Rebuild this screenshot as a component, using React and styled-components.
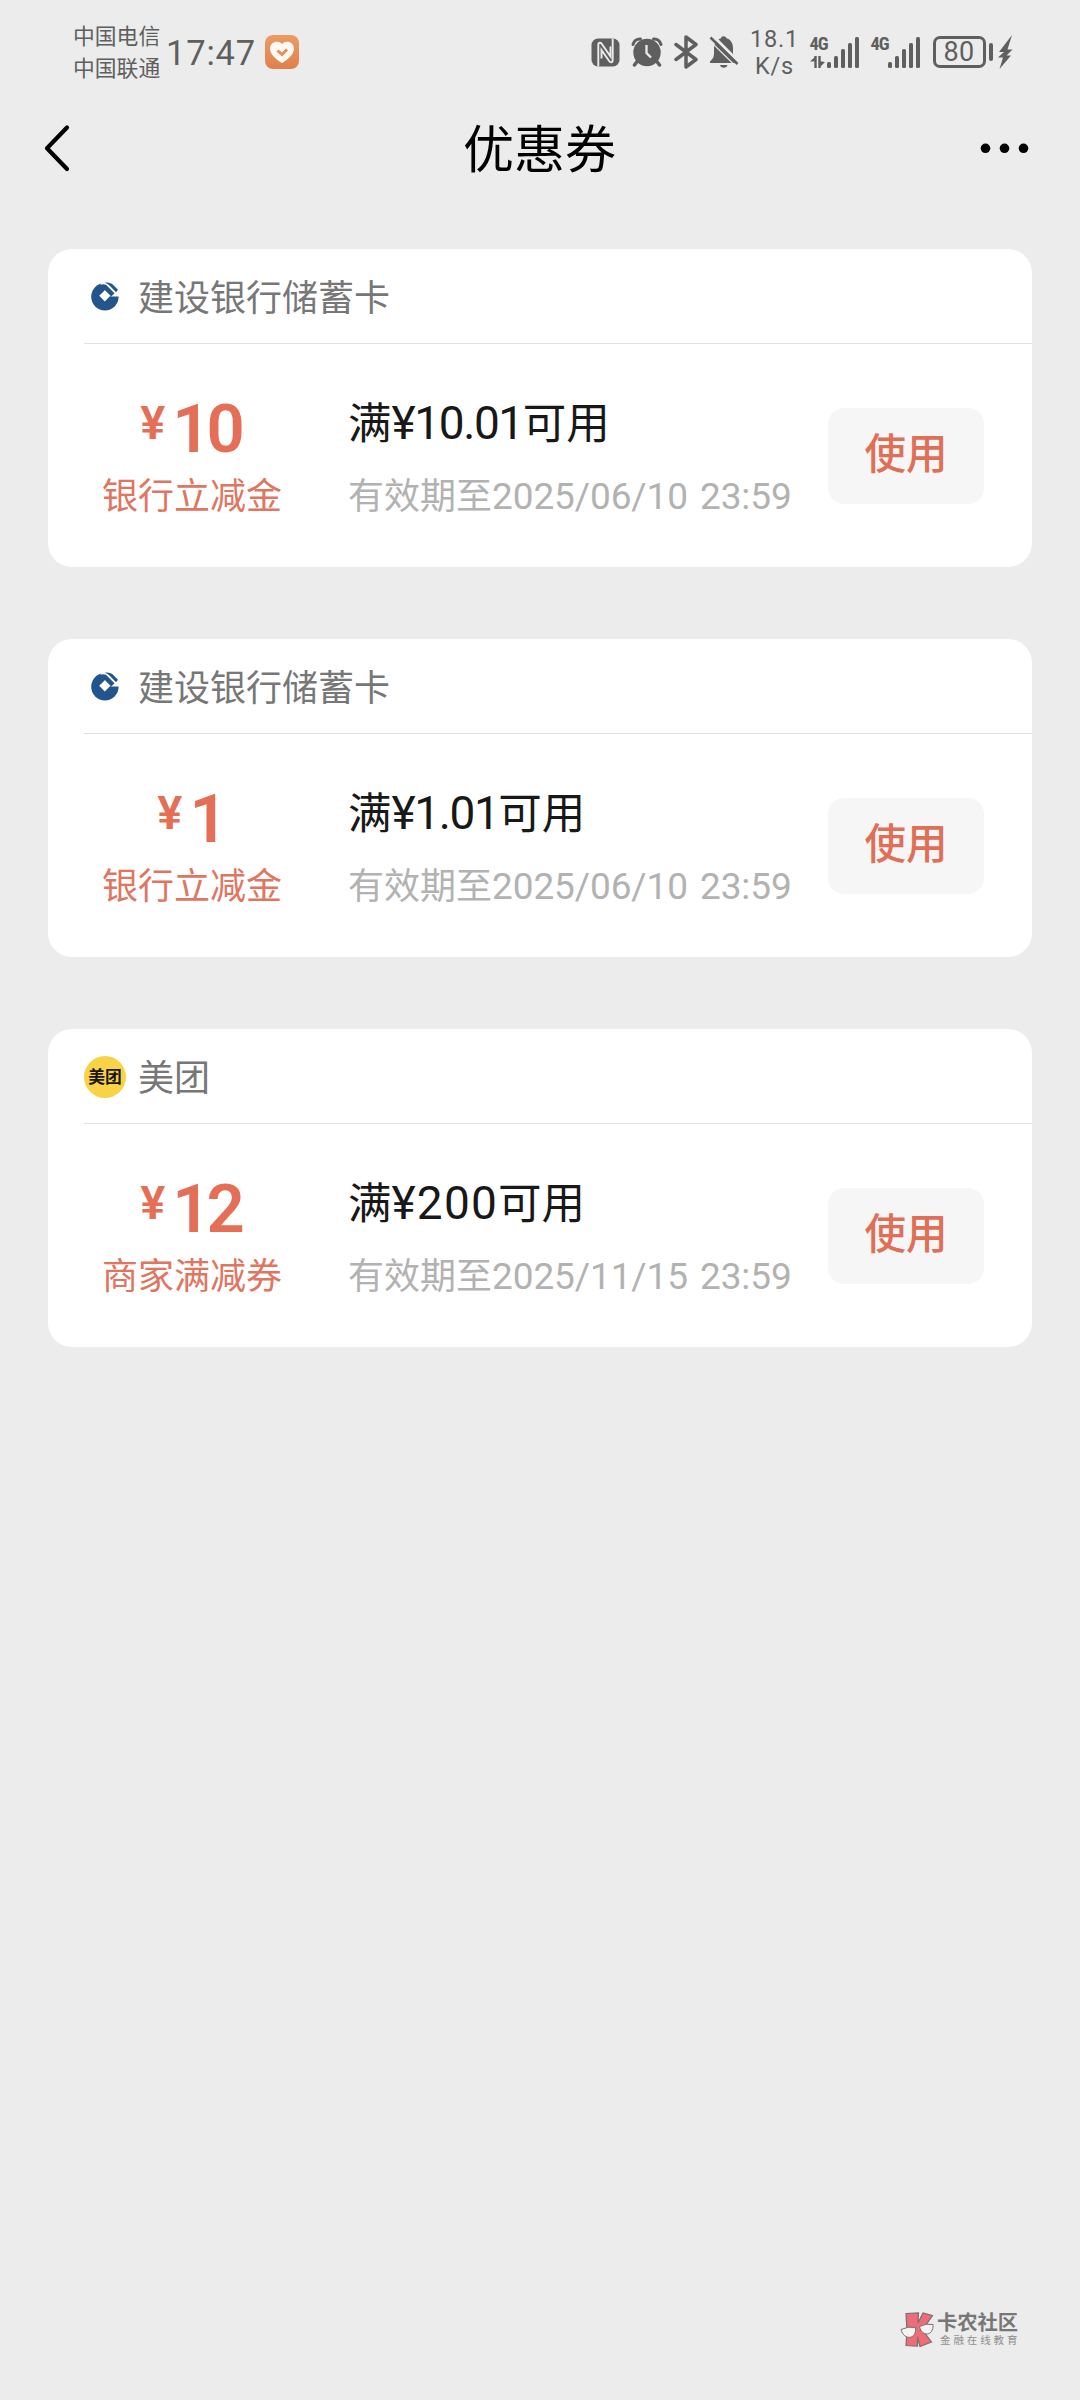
import React from "react";
import styled, { createGlobalStyle } from "styled-components";

const GlobalStyle = createGlobalStyle`
  * { box-sizing: border-box; }
  body {
    margin: 0;
    background: #ececec;
    font-family: Roboto, "Noto Sans CJK SC", sans-serif;
  }
  svg { display: block; flex: none; }
`;

const Screen = styled.div`
  width: 1080px;
  height: 2400px;
  display: flex;
  flex-direction: column;
  background: #ececec;
  overflow: hidden;
`;

const StatusBar = styled.header`
  height: 100px;
  padding: 4px 67px 0 73px;
  display: flex;
  align-items: center;
  color: #5f5f5f;
`;

const Carriers = styled.div`
  width: 88px;
  padding-top: 2px;
  font-size: 21.8px;
  line-height: 32px;
  white-space: nowrap;
`;

const Clock = styled.div`
  width: 99px;
  margin-left: 5px;
  padding-top: 2px;
  font-size: 34.5px;
  letter-spacing: 0.8px;
  line-height: 40px;
`;

const StatusIcons = styled.div`
  margin-left: auto;
  height: 36px;
  display: flex;
  align-items: center;
`;

const IconRow = styled.div`
  display: flex;
  align-items: center;
  gap: 11px;
`;

const Speed = styled.div`
  width: 58px;
  margin-left: 7px;
  padding-top: 1px;
  font-size: 23.5px;
  letter-spacing: 0.8px;
  line-height: 27px;
  text-align: center;
`;

const Signal = styled.div`
  display: flex;
  align-items: flex-end;
  width: 50px;
  height: 31px;
  margin-left: ${(p) => p.$gap}px;
`;

const Network = styled.div`
  width: 17px;
  height: 31px;
  display: flex;
  flex-direction: column;
  justify-content: space-between;
  font: 700 18.5px/15px Roboto, sans-serif;
  font-stretch: 75%;
  letter-spacing: -1px;
`;

const Bars = styled.div`
  display: flex;
  align-items: flex-end;
  gap: 3px;
`;

const Bar = styled.i`
  width: 4.2px;
  height: ${(p) => p.$h}px;
  border-radius: 1.5px;
  background: #5f5f5f;
`;

const Battery = styled.div`
  width: 53px;
  height: 32px;
  margin-left: 12px;
  border: 3px solid #5f5f5f;
  border-radius: 7px;
  font-size: 27px;
  line-height: 27px;
  letter-spacing: 0.3px;
  text-align: center;
`;

const BatteryCap = styled.i`
  width: 4.5px;
  height: 18px;
  margin: 0 5px 0 3px;
  border-radius: 2px;
  background: #5f5f5f;
`;

const NavBar = styled.nav`
  height: 96px;
  padding: 0 50px 0 43px;
  display: grid;
  grid-template-columns: 1fr auto 1fr;
  align-items: center;
  svg:last-child { justify-self: end; }
`;

const PageTitle = styled.h1`
  margin: 0;
  padding: 5px 0 0 6px;
  font-size: 51px;
  font-weight: 400;
  line-height: 60px;
  color: #000;
`;

const CouponList = styled.main`
  padding: 53px 48px 0;
  display: flex;
  flex-direction: column;
  gap: 72px;
`;

const Card = styled.section`
  height: 318px;
  padding-left: 36px;
  border-radius: 24px;
  background: #fff;
`;

const CardHeader = styled.div`
  height: 95px;
  padding-top: 2px;
  display: flex;
  align-items: center;
  gap: 12px;
  border-bottom: 1px solid #e0e0e0;
  font-size: 36px;
  color: #777;
`;

const Issuer = styled.span`
  line-height: 42px;
  padding-top: 3px;
`;

const MeituanBadge = styled.span`
  width: 42px;
  height: 42px;
  display: flex;
  align-items: center;
  justify-content: center;
  border-radius: 50%;
  background: #f8d247;
  color: #1b1607;
  font-size: 16.8px;
  font-weight: 700;
  line-height: 42px;
`;

const CardBody = styled.div`
  height: 223px;
  display: flex;
  padding-right: 48px;
`;

const Worth = styled.div`
  width: 216px;
  padding-top: 44px;
  display: flex;
  flex-direction: column;
  align-items: center;
  color: #e56f56;
`;

const Amount = styled.div`
  height: 76px;
  padding-right: 3px;
  display: flex;
  align-items: flex-start;
  font-weight: 600;
`;

const Yen = styled.span`
  font-size: 47px;
  line-height: 70px;
`;

const Figure = styled.span`
  margin-left: 7px;
  font-size: 67px;
  line-height: 83px;
  letter-spacing: -4px;
`;

const Kind = styled.div`
  font-size: 36px;
  line-height: 66px;
  color: #e07561;
`;

const Info = styled.div`
  flex: 1;
  padding: 43px 0 0 48px;
  white-space: nowrap;
`;

const Condition = styled.div`
  font-size: 43.5px;
  line-height: 72px;
  color: #181818;
`;

const Money = styled.span`
  font-size: 46px;
  letter-spacing: ${(p) => (p.$decimal ? -1.4 : 1.2)}px;
`;

const Validity = styled.div`
  padding-top: 3px;
  font-size: 36px;
  line-height: 66px;
  color: #b2b2b2;
`;

const Stamp = styled.span`
  font-size: 37px;
  word-spacing: 3px;
  letter-spacing: -0.1px;
`;

const UseButton = styled.button`
  width: 156px;
  height: 96px;
  margin-top: 64px;
  padding: 0 0 10px 0;
  border: 0;
  border-radius: 16px;
  background: #f6f6f6;
  color: #e06f58;
  font-family: inherit;
  font-size: 41.5px;
  font-weight: 500;
`;

const Watermark = styled.footer`
  margin-top: auto;
  padding: 0 61px 52px 0;
  display: flex;
  justify-content: flex-end;
  align-items: center;
  gap: 2px;
`;

const Brand = styled.div`
  width: 82px;
  color: #777;
  font-size: 20.3px;
  font-weight: 700;
  line-height: 21px;
  white-space: nowrap;
`;

const Tagline = styled.div`
  padding-left: 3px;
  color: #8f8f8f;
  font-size: 10.5px;
  font-weight: 400;
  letter-spacing: 2.9px;
  line-height: 13px;
`;

const HeartIcon = () => (
  <svg width="34" height="34" viewBox="0 0 34 34">
    <defs>
      <linearGradient id="heartBg" x1="0" y1="0" x2="0" y2="1">
        <stop offset="0" stopColor="#eb9c63" />
        <stop offset="1" stopColor="#e0804f" />
      </linearGradient>
    </defs>
    <rect width="34" height="34" rx="8" fill="url(#heartBg)" />
    <path d="M17 28C14 26.5 5 20.5 5 13.5C5 7 13 4.5 17 9C21 4.500 29 7 29 13.500C29 20.500 20 26.500 17 28Z" fill="#fffaf3" />
    <path d="M12.500 15.500L17 19.500L22 14.500" fill="none" stroke="#e98d59" strokeWidth="3" />
  </svg>
);

const NfcIcon = () => (
  <svg width="29" height="29" viewBox="0 0 29 29">
    <rect x=".5" y=".5" width="28" height="28" rx="6.500" fill="#5f5f5f" />
    <path d="M7.300 28.500V6.500C7.300 4.500 9.500 4.200 10.700 5.800L19.500 18.500V8.500" fill="none" stroke="#ececec" strokeWidth="1.900" />
    <path d="M21.700 .5V22.500C21.700 24.500 19.500 24.800 18.300 23.200L10.500 12V20.500" fill="none" stroke="#ececec" strokeWidth="1.900" />
  </svg>
);

const AlarmIcon = () => (
  <svg width="32" height="30" viewBox="0 0 32 30">
    <circle cx="16" cy="15.500" r="13.700" fill="#5f5f5f" />
    <path d="M2 7.500C3 4 6 1.800 9.500 2M30 7.500C29 4 26 1.800 22.500 2" fill="none" stroke="#5f5f5f" strokeWidth="3" strokeLinecap="round" />
    <path d="M6.500 24L3.500 28M25.500 24L28.500 28" stroke="#5f5f5f" strokeWidth="3.500" strokeLinecap="round" />
    <path d="M15.500 8V16L20 20.500" fill="none" stroke="#ececec" strokeWidth="2.300" />
  </svg>
);

const BluetoothIcon = () => (
  <svg width="24" height="34" viewBox="0 0 24 34">
    <path d="M2 9.500L22 24.500L12 32V2L22 9.500L2 24.500" fill="none" stroke="#5f5f5f" strokeWidth="3.500" strokeLinejoin="round" strokeLinecap="round" />
  </svg>
);

const MutedBellIcon = () => (
  <svg width="30" height="34" viewBox="0 0 30 34">
    <path d="M1 26.500C4 24 5 21.500 5 18V13C5 8 8.500 4 12 3.200C12 0.500 17 0.500 17.500 3.200C21.500 4.200 24 8 24 13V18C24 21.500 25.500 24 28.500 26.500V28H1Z" fill="#5f5f5f" />
    <path d="M11 30H18.500C18 33.500 11.500 33.500 11 30Z" fill="#5f5f5f" />
    <path d="M3 0L30 27" stroke="#ececec" strokeWidth="3" />
    <path d="M1.500 2.500L28.500 29" stroke="#5f5f5f" strokeWidth="2.500" />
    <path d="M0 5L26 30.500" stroke="#ececec" strokeWidth="1.200" />
  </svg>
);

const DataArrows = () => (
  <svg width="16" height="12" viewBox="0 0 16 12">
    <path d="M5.500 0V12M9.500 0V12" stroke="#5f5f5f" strokeWidth="2.400" />
    <path d="M6 0V5.500H0ZM9 12V5L15 6Z" fill="#5f5f5f" />
  </svg>
);

const BoltIcon = () => (
  <svg width="15" height="34" viewBox="0 0 15 34">
    <path d="M14 0L1 17H6L0 22.500H5L1.500 34L13 20.500H8.500L14.500 14.500H9.500Z" fill="#5f5f5f" />
  </svg>
);

const BackIcon = () => (
  <svg width="28" height="48" viewBox="0 0 28 48">
    <path d="M24 3.500L4 24.200L24 45" fill="none" stroke="#000" strokeWidth="4.200" strokeLinecap="round" strokeLinejoin="round" />
  </svg>
);

const MoreIcon = () => (
  <svg width="50" height="12" viewBox="0 0 50 12">
    <circle cx="5.500" cy="6.300" r="4.800" />
    <circle cx="24.500" cy="6.300" r="4.800" />
    <circle cx="43.500" cy="6.300" r="4.800" />
  </svg>
);

const CcbLogo = () => (
  <svg width="42" height="42" viewBox="0 0 42 42">
    <circle cx="20.900" cy="20.800" r="13.700" fill="#24548c" />
    <path d="M18 4H38V20.600H27L16 10Z" fill="#fff" />
    <path d="M20.800 14L26.400 19.800L20.800 25.600L15.200 19.800Z" fill="#fff" />
    <path d="M13 10.500Q17 7.300 22 8.700L30.500 17.200L27.300 20.600L20.800 14L17 17.800Z" fill="#24548c" />
    <path d="M20.500 6.800Q25 5.600 28.200 8L34 13.700L32 16.300L25.500 9.600Q23.500 7.400 20.500 6.800Z" fill="#24548c" />
  </svg>
);

const KnongLogo = () => (
  <svg width="35" height="36" viewBox="0 0 35 36">
    <path d="M6 1.500L18.500 1L18 11L23 1L32.500 3.500L22.500 18L31.500 30L20 34.500L17.500 25V34L6 33.500L7 19Z" fill="#ee6c78" stroke="#77716f" strokeWidth="1.200" />
    <path d="M1 17.500Q8 14 15.500 15.500C17 27.500 4 29 1 17.500ZM19.500 14.500Q26 11 33 12.500C34 24 22 25.500 19.500 14.500Z" fill="#f4f2f2" stroke="#77716f" strokeWidth="1" />
  </svg>
);

const coupons = [
  { issuer: "建设银行储蓄卡", logo: "ccb", amount: "10", kind: "银行立减金", min: "¥10.01", until: "2025/06/10 23:59" },
  { issuer: "建设银行储蓄卡", logo: "ccb", amount: "1", kind: "银行立减金", min: "¥1.01", until: "2025/06/10 23:59" },
  { issuer: "美团", logo: "meituan", amount: "12", kind: "商家满减券", min: "¥200", until: "2025/11/15 23:59" },
];

const SignalBars = () => (
  <Bars>
    {[6, 12, 18.5, 25, 31].map((h) => <Bar key={h} $h={h} />)}
  </Bars>
);

const Coupon = ({ issuer, logo, amount, kind, min, until }) => (
  <Card>
    <CardHeader>
      {logo === "ccb" ? <CcbLogo /> : <MeituanBadge>美团</MeituanBadge>}
      <Issuer>{issuer}</Issuer>
    </CardHeader>
    <CardBody>
      <Worth>
        <Amount><Yen>¥</Yen><Figure>{amount}</Figure></Amount>
        <Kind>{kind}</Kind>
      </Worth>
      <Info>
        <Condition>满<Money $decimal={min.includes(".")}>{min}</Money>可用</Condition>
        <Validity>有效期至<Stamp>{until}</Stamp></Validity>
      </Info>
      <UseButton>使用</UseButton>
    </CardBody>
  </Card>
);

export default function App() {
  return (
    <Screen>
      <GlobalStyle />
      <StatusBar>
        <Carriers>中国电信<br />中国联通</Carriers>
        <Clock>17:47</Clock>
        <HeartIcon />
        <StatusIcons>
          <IconRow><NfcIcon /><AlarmIcon /><BluetoothIcon /><MutedBellIcon /></IconRow>
          <Speed>18.1<br />K/s</Speed>
          <Signal $gap={6}>
            <Network>4G<DataArrows /></Network>
            <SignalBars />
          </Signal>
          <Signal $gap={11}>
            <Network>4G</Network>
            <SignalBars />
          </Signal>
          <Battery>80</Battery>
          <BatteryCap />
          <BoltIcon />
        </StatusIcons>
      </StatusBar>
      <NavBar>
        <BackIcon />
        <PageTitle>优惠券</PageTitle>
        <MoreIcon />
      </NavBar>
      <CouponList>
        {coupons.map((c, i) => <Coupon key={i} {...c} />)}
      </CouponList>
      <Watermark>
        <KnongLogo />
        <Brand>卡农社区<Tagline>金融在线教育</Tagline></Brand>
      </Watermark>
    </Screen>
  );
}
